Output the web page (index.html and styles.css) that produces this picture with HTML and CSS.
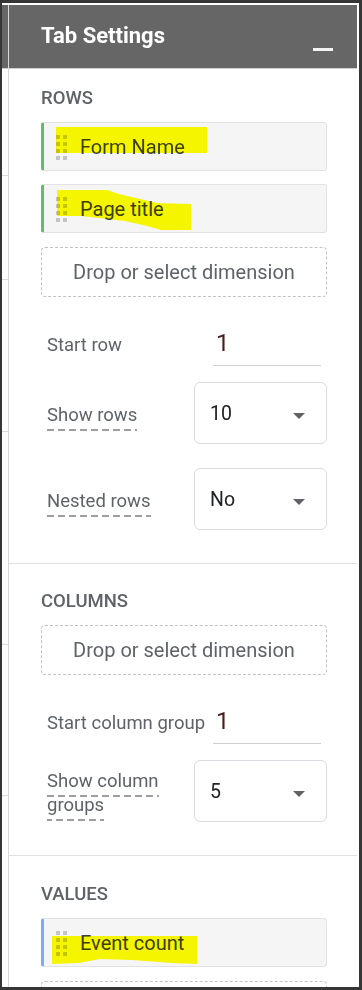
FILE: index.html
```html
<!DOCTYPE html>
<html lang="en">
<head>
<meta charset="utf-8">
<title>Tab Settings</title>
<link rel="stylesheet" href="styles.css">
</head>
<body>
<div class="frame">
  <div class="bg-strip">
    <div class="strip-head"></div>
    <div class="strip-row sr1"></div>
    <div class="strip-row sr2"></div>
    <div class="strip-row sr3"></div>
    <div class="strip-row sr4"></div>
    <div class="strip-row sr5"></div>
  </div>
  <div class="panel">
    <div class="panel-header">
      <span class="title">Tab Settings</span>
      <span class="minimize"></span>
    </div>

    <div class="section sec-rows">
      <div class="sec-title">ROWS</div>
      <div class="chip chip-dim">
        <span class="handle"><i></i><i></i><i></i><i></i><i></i><i></i><i></i><i></i></span>
        <span class="chip-text">Form Name</span>
        <span class="hl hl-form"></span>
      </div>
      <div class="chip chip-dim chip-next">
        <span class="handle"><i></i><i></i><i></i><i></i><i></i><i></i><i></i><i></i></span>
        <span class="chip-text">Page title</span>
        <span class="hl hl-page"></span>
      </div>
      <div class="dropzone dz-gap">Drop or select dimension</div>

      <div class="set-row input-row">
        <div class="label">Start row</div>
        <div class="num-input"><span>1</span></div>
      </div>
      <div class="set-row select-row first-select">
        <div class="label"><span class="dashed">Show rows</span></div>
        <div class="select"><span class="sel-val">10</span><span class="arrow"></span></div>
      </div>
      <div class="set-row select-row next-select">
        <div class="label"><span class="dashed">Nested rows</span></div>
        <div class="select"><span class="sel-val">No</span><span class="arrow"></span></div>
      </div>
    </div>

    <div class="section sec-cols">
      <div class="sec-title">COLUMNS</div>
      <div class="dropzone">Drop or select dimension</div>
      <div class="set-row input-row">
        <div class="label">Start column group</div>
        <div class="num-input"><span>1</span></div>
      </div>
      <div class="set-row select-row first-select">
        <div class="label"><span class="dashed">Show column groups</span></div>
        <div class="select"><span class="sel-val">5</span><span class="arrow"></span></div>
      </div>
    </div>

    <div class="section sec-vals">
      <div class="sec-title">VALUES</div>
      <div class="chip chip-metric">
        <span class="handle"><i></i><i></i><i></i><i></i><i></i><i></i><i></i><i></i></span>
        <span class="chip-text">Event count</span>
        <span class="hl hl-event"></span>
      </div>
      <div class="dropzone dz-gap"></div>
    </div>
  </div>
</div>
</body>
</html>
```

FILE: styles.css
```css
* { box-sizing: border-box; }

html, body {
  margin: 0;
  padding: 0;
  background: #ffffff;
}

body {
  font-family: Roboto, "Liberation Sans", Arial, sans-serif;
  width: 362px;
  height: 990px;
  overflow: hidden;
}

.frame {
  width: 362px;
  height: 990px;
  border-style: solid;
  border-color: #363636;
  border-width: 3px 3px 3px 2px;
  padding: 2px 2px 0 0;
  background: #ffffff;
  display: flex;
  overflow: hidden;
}

/* background page strip on the left */
.bg-strip {
  width: 7px;
  flex: none;
  border-right: 1px solid #d8d8d8;
  display: flex;
  flex-direction: column;
}
.strip-head {
  height: 64px;
  flex: none;
  background: #666666;
  border-bottom: 1px solid #d0d0d0;
}
.strip-row {
  flex: none;
  border-bottom: 1px solid #dcdcdc;
}
.sr1 { height: 107px; }
.sr2 { height: 104px; }
.sr3 { height: 152px; }
.sr4 { height: 213px; }
.sr5 { height: 151px; }

/* panel */
.panel {
  width: 348px;
  flex: none;
  display: flex;
  flex-direction: column;
}

.panel-header {
  height: 64px;
  flex: none;
  background: #666666;
  border-bottom: 1px solid #d0d0d0;
  display: flex;
  align-items: flex-start;
  justify-content: space-between;
  padding: 18px 24px 0 32px;
}
.title {
  color: #ffffff;
  font-weight: 700;
  font-size: 22px;
  line-height: 26px;
}
.minimize {
  width: 20px;
  height: 3px;
  background: #f4f4f4;
  margin-top: 25px;
}

.section {
  padding: 26px 30px 33px 32px;
  border-bottom: 1px solid #e0e0e0;
  flex: none;
}
.sec-rows { padding-top: 18px; }
.sec-vals { padding-top: 27px; border-bottom: none; }

.sec-title {
  font-size: 18.5px;
  font-weight: 500;
  line-height: 22px;
  color: #5f6368;
}

.chip {
  position: relative;
  margin-top: 13px;
  height: 49px;
  background: #f5f5f5;
  border: 1px solid #e2e2e2;
  border-left: 3px solid #66bb6a;
  border-radius: 3px;
  display: flex;
  align-items: center;
  padding-left: 12px;
}
.chip-metric { border-left-color: #7baaf7; }

.handle {
  display: grid;
  grid-template-columns: 4px 4px;
  grid-auto-rows: 4px;
  column-gap: 3px;
  row-gap: 3px;
  margin-top: 1px;
}
.handle i {
  display: block;
  width: 4px;
  height: 4px;
  background: #c4c4c4;
}
.chip-text {
  margin-left: 13px;
  font-size: 20px;
  color: #3c4043;
}

/* yellow marker highlight drawn over the screenshot */
.hl {
  position: absolute;
  background: #ffff00;
  mix-blend-mode: multiply;
  pointer-events: none;
}
.hl-form {
  left: 12px;
  top: 4px;
  width: 151px;
  height: 26px;
}
.hl-page {
  left: 13px;
  top: 5px;
  width: 134px;
  height: 40px;
  clip-path: polygon(0 0, 50px 0, 62px 4px, 100px 13px, 134px 14px, 134px 40px, 104px 40px, 90px 36px, 68px 31px, 24px 26px, 0 26px);
}
.hl-event {
  left: 8px;
  top: 17px;
  width: 145px;
  height: 28px;
  clip-path: polygon(0 0, 145px 0, 145px 28px, 120px 27px, 80px 24px, 48px 23px, 27px 27px, 0 28px);
}

.dropzone {
  margin-top: 13px;
  height: 50px;
  border: 1px dashed #c2c2c2;
  border-radius: 4px;
  display: flex;
  align-items: center;
  justify-content: center;
  font-size: 20px;
  color: #5f6368;
}
.dz-gap { margin-top: 14px; }

.set-row {
  display: flex;
}
.label {
  flex: 1;
  min-width: 0;
  padding-left: 6px;
  font-size: 18.5px;
  line-height: 24px;
  color: #5f6368;
}

.input-row {
  margin-top: 20px;
  align-items: baseline;
}
.num-input {
  width: 108px;
  flex: none;
  margin-right: 6px;
  height: 49px;
  border-bottom: 1px solid #cfcfcf;
  display: flex;
  align-items: flex-end;
  padding: 0 0 8px 3px;
  font-size: 24px;
  line-height: 28px;
  color: #4a1d1d;
}

.select-row {
  align-items: center;
}
.select-row .label { padding-top: 4px; }
.first-select { margin-top: 16px; }
.next-select { margin-top: 24px; }

.dashed {
  padding-bottom: 4.5px;
  background-image: linear-gradient(to right, #9e9e9e 0, #9e9e9e 7px, transparent 7px, transparent 11px);
  background-size: 11px 2px;
  background-repeat: repeat-x;
  background-position: left bottom;
}

.select {
  width: 133px;
  flex: none;
  height: 62px;
  border: 1px solid #dadce0;
  border-radius: 6px;
  display: flex;
  align-items: center;
  justify-content: space-between;
  padding: 0 21px 0 15px;
}
.sel-val {
  font-size: 19.5px;
  color: #202124;
}
.arrow {
  width: 0;
  height: 0;
  border-left: 6.5px solid transparent;
  border-right: 6.5px solid transparent;
  border-top: 6px solid #5f6368;
  margin-top: 6px;
}
```
